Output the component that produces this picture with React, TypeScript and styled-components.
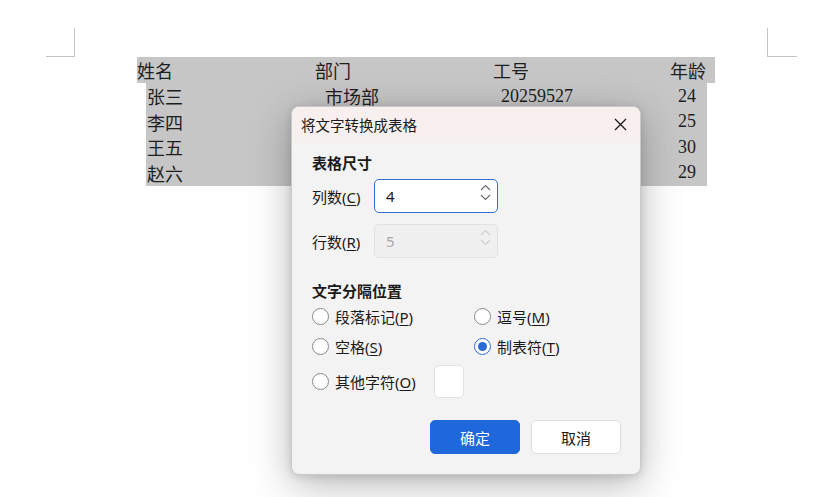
import React from "react";
import styled, { createGlobalStyle } from "styled-components";

const GlobalStyle = createGlobalStyle`
  html, body {
    margin: 0;
    padding: 0;
    background: #ffffff;
  }
  body {
    font-family: "Noto Sans", "Noto Sans CJK SC", sans-serif;
  }
`;

// Document page behind the dialog
const Page = styled.div`
  position: relative;
  width: 832px;
  height: 497px;
  padding-top: 28px;
  box-sizing: border-box;
  overflow: hidden;
  background: #fff;
`;

const MarginRow = styled.div`
  display: flex;
  justify-content: space-between;
  padding: 0 35px 0 46px;
`;

const CornerMark = styled.div<{ $side: "left" | "right" }>`
  width: 29px;
  height: 29px;
  box-sizing: border-box;
  border-bottom: 1px solid #c4c4c4;
  ${({ $side }) =>
    $side === "left" ? "border-right: 1px solid #c4c4c4;" : "border-left: 1px solid #c4c4c4; width: 30px;"}
`;

const DocTable = styled.div`
  font-family: "Liberation Serif", "Noto Sans CJK SC", serif;
  font-size: 18px;
  color: #1e1e1e;
`;

const HeaderRow = styled.div`
  display: grid;
  grid-template-columns: 178px 178px 1fr auto;
  align-items: center;
  margin-left: 137px;
  width: 578px;
  height: 26px;
  padding-right: 9px;
  box-sizing: border-box;
  background: #c6c6c6;
`;

const BodyRows = styled.div`
  margin-left: 146px;
  width: 561px;
  background: #c6c6c6;
  padding-bottom: 1px;
`;

const BodyRow = styled.div`
  display: grid;
  grid-template-columns: 178px 176px 1fr auto;
  align-items: center;
  height: 25.5px;
  padding: 0 11px 0 1px;
`;

const Cell = styled.span<{ $right?: boolean }>`
  white-space: nowrap;
  text-align: ${({ $right }) => ($right ? "right" : "left")};
`;

// Dialog
const Dialog = styled.div`
  position: absolute;
  left: 291px;
  top: 106px;
  width: 350px;
  height: 369px;
  border-radius: 8px;
  background: #f3f3f3;
  border: 1px solid #c9c9c9;
  box-sizing: border-box;
  box-shadow: 0 10px 40px rgba(0, 0, 0, 0.28), 0 2px 8px rgba(0, 0, 0, 0.12);
  display: flex;
  flex-direction: column;
  overflow: hidden;
  color: #1a1a1a;
`;

const TitleBar = styled.div`
  display: flex;
  align-items: center;
  justify-content: space-between;
  height: 36px;
  box-sizing: border-box;
  padding: 0 9px 2px 9px;
  background: #f8f0ef;
  font-size: 14.5px;
`;

const CloseButton = styled.button`
  display: flex;
  align-items: center;
  justify-content: center;
  width: 22px;
  height: 22px;
  padding: 0;
  border: none;
  background: transparent;
`;

const Body = styled.div`
  display: flex;
  flex-direction: column;
  padding: 9px 19px 0 20px;
  flex: 1;
`;

const SectionTitle = styled.div<{ $top?: number }>`
  font-size: 15px;
  font-weight: 700;
  line-height: 22px;
  margin-top: ${({ $top }) => $top ?? 0}px;
`;

const FieldRow = styled.div<{ $top: number }>`
  display: flex;
  align-items: center;
  gap: 12px;
  margin-top: ${({ $top }) => $top}px;
`;

const FieldLabel = styled.span`
  width: 50px;
  font-size: 15px;
  white-space: nowrap;
  color: #1a1a1a;
`;

const Mn = styled.span`
  text-decoration: underline;
  text-underline-offset: 2px;
`;

const SpinBox = styled.div<{ $disabled?: boolean }>`
  position: relative;
  display: flex;
  align-items: center;
  width: 124px;
  height: 34px;
  box-sizing: border-box;
  padding-left: 11px;
  border-radius: 5px;
  font-size: 15px;
  border: 1px solid ${({ $disabled }) => ($disabled ? "#e1e1e1" : "#2f6fd6")};
  background: ${({ $disabled }) => ($disabled ? "#f0f0f0" : "#ffffff")};
  color: ${({ $disabled }) => ($disabled ? "#a8a8a8" : "#1a1a1a")};
`;

const Spinner = styled.div`
  position: absolute;
  right: 6px;
  top: 4px;
  display: flex;
  flex-direction: column;
  gap: 3px;
`;

const RadioGrid = styled.div`
  display: grid;
  grid-template-columns: 162px 1fr;
  margin-top: -1px;
`;

const RadioItem = styled.label<{ $h: number }>`
  display: flex;
  align-items: center;
  gap: 6px;
  height: ${({ $h }) => $h}px;
  font-size: 15px;
`;

const RadioText = styled.span`
  white-space: nowrap;
`;

const RadioCircle = styled.span<{ $checked?: boolean }>`
  width: 17px;
  height: 17px;
  box-sizing: border-box;
  border-radius: 50%;
  background: #fff;
  border: 1px solid ${({ $checked }) => ($checked ? "#2a6bd6" : "#8a8a8a")};
  display: flex;
  align-items: center;
  justify-content: center;
  flex-shrink: 0;
  &::after {
    content: "";
    width: 9px;
    height: 9px;
    border-radius: 50%;
    background: #2a6bd6;
    display: ${({ $checked }) => ($checked ? "block" : "none")};
  }
`;

const CharBox = styled.span`
  width: 30px;
  height: 33px;
  box-sizing: border-box;
  margin-left: 12px;
  border: 1px solid #e2e2e2;
  border-radius: 5px;
  background: #fff;
`;

const Footer = styled.div`
  display: flex;
  justify-content: flex-end;
  gap: 11px;
  margin-top: auto;
  padding-bottom: 20px;
`;

const Button = styled.button<{ $primary?: boolean }>`
  width: 90px;
  height: 34px;
  border-radius: 5px;
  font-family: "Noto Sans CJK SC", sans-serif;
  font-size: 15px;
  border: 1px solid ${({ $primary }) => ($primary ? "#1f68dc" : "#e0e0e0")};
  background: ${({ $primary }) => ($primary ? "#1f68dc" : "#ffffff")};
  color: ${({ $primary }) => ($primary ? "#ffffff" : "#1a1a1a")};
`;

const Chevron = ({ up, color }: { up?: boolean; color: string }) => (
  <svg width="11" height="7" viewBox="0 0 11 7">
    <path
      d={up ? "M1 6 L5.5 1.5 L10 6" : "M1 1 L5.5 5.5 L10 1"}
      fill="none"
      stroke={color}
      strokeWidth="1.1"
    />
  </svg>
);

const rows = [
  ["张三", "市场部", "20259527", "24"],
  ["李四", "", "", "25"],
  ["王五", "", "", "30"],
  ["赵六", "", "", "29"],
];

const Radio = ({ label, mn, checked }: { label: string; mn: string; checked?: boolean }) => (
  <>
    <RadioCircle $checked={checked} />
    <RadioText>
      {label}(<Mn>{mn}</Mn>)
    </RadioText>
  </>
);

const App = () => {
  return (
    <>
      <GlobalStyle />
      <Page>
        <MarginRow>
          <CornerMark $side="left" />
          <CornerMark $side="right" />
        </MarginRow>

        <DocTable>
          <HeaderRow>
            <Cell>姓名</Cell>
            <Cell>部门</Cell>
            <Cell>工号</Cell>
            <Cell $right>年龄</Cell>
          </HeaderRow>
          <BodyRows>
            {rows.map((r) => (
              <BodyRow key={r[0]}>
                <Cell>{r[0]}</Cell>
                <Cell>{r[1]}</Cell>
                <Cell>{r[2]}</Cell>
                <Cell $right>{r[3]}</Cell>
              </BodyRow>
            ))}
          </BodyRows>
        </DocTable>

        <Dialog>
          <TitleBar>
            <span>将文字转换成表格</span>
            <CloseButton aria-label="关闭">
              <svg width="13" height="13" viewBox="0 0 13 13">
                <path d="M1 1 L12 12 M12 1 L1 12" stroke="#1a1a1a" strokeWidth="1.3" />
              </svg>
            </CloseButton>
          </TitleBar>

          <Body>
            <SectionTitle>表格尺寸</SectionTitle>
            <FieldRow $top={5}>
              <FieldLabel>
                列数(<Mn>C</Mn>)
              </FieldLabel>
              <SpinBox>
                4
                <Spinner>
                  <Chevron up color="#6a6a6a" />
                  <Chevron color="#6a6a6a" />
                </Spinner>
              </SpinBox>
            </FieldRow>
            <FieldRow $top={11}>
              <FieldLabel>
                行数(<Mn>R</Mn>)
              </FieldLabel>
              <SpinBox $disabled>
                5
                <Spinner>
                  <Chevron up color="#cfcfcf" />
                  <Chevron color="#cfcfcf" />
                </Spinner>
              </SpinBox>
            </FieldRow>

            <SectionTitle $top={22}>文字分隔位置</SectionTitle>
            <RadioGrid>
              <RadioItem $h={30}>
                <Radio label="段落标记" mn="P" />
              </RadioItem>
              <RadioItem $h={30}>
                <Radio label="逗号" mn="M" />
              </RadioItem>
              <RadioItem $h={30}>
                <Radio label="空格" mn="S" />
              </RadioItem>
              <RadioItem $h={30}>
                <Radio label="制表符" mn="T" checked />
              </RadioItem>
              <RadioItem $h={40}>
                <Radio label="其他字符" mn="O" />
                <CharBox />
              </RadioItem>
            </RadioGrid>

            <Footer>
              <Button $primary>确定</Button>
              <Button>取消</Button>
            </Footer>
          </Body>
        </Dialog>
      </Page>
    </>
  );
};

export default App;
